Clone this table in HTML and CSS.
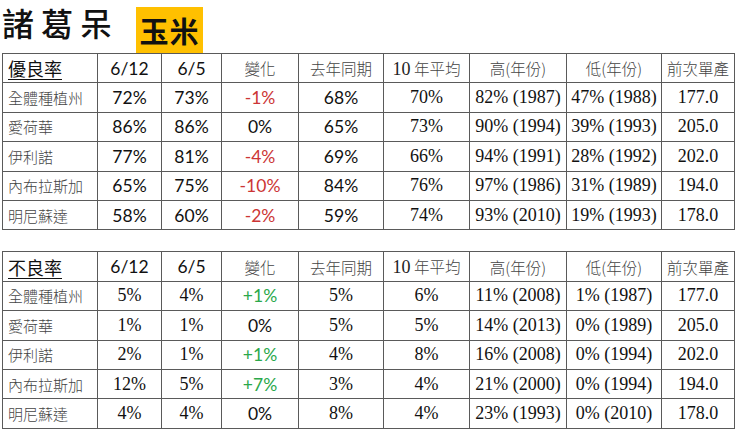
FILE: index.html
```html
<!DOCTYPE html>
<html lang="zh-Hant">
<head>
<meta charset="utf-8">
<link rel="stylesheet" href="styles.css">
</head>
<body>
<div class="page">
  <div class="head">
    <div class="title">諸葛呆</div>
    <div class="badge">玉米</div>
  </div>
  <table class="grid">
    <colgroup>
      <col class="c1"><col class="c2"><col class="c3"><col class="c4"><col class="c5"><col class="c6"><col class="c7"><col class="c8"><col class="c9">
    </colgroup>
    <tr>
      <th class="lead">優良率</th><th class="s">6/12</th><th class="s">6/5</th><th class="zh">變化</th><th class="zh">去年同期</th><th class="zh"><span class="r">10</span> 年平均</th><th class="zh">高(年份)</th><th class="zh">低(年份)</th><th class="zh">前次單產</th>
    </tr>
    <tr><td class="name">全體種植州</td><td class="s">72%</td><td class="s">73%</td><td class="s neg">-1%</td><td class="s">68%</td><td class="r">70%</td><td class="r">82% (1987)</td><td class="r">47% (1988)</td><td class="r">177.0</td></tr>
    <tr><td class="name">愛荷華</td><td class="s">86%</td><td class="s">86%</td><td class="s">0%</td><td class="s">65%</td><td class="r">73%</td><td class="r">90% (1994)</td><td class="r">39% (1993)</td><td class="r">205.0</td></tr>
    <tr><td class="name">伊利諾</td><td class="s">77%</td><td class="s">81%</td><td class="s neg">-4%</td><td class="s">69%</td><td class="r">66%</td><td class="r">94% (1991)</td><td class="r">28% (1992)</td><td class="r">202.0</td></tr>
    <tr><td class="name">內布拉斯加</td><td class="s">65%</td><td class="s">75%</td><td class="s neg">-10%</td><td class="s">84%</td><td class="r">76%</td><td class="r">97% (1986)</td><td class="r">31% (1989)</td><td class="r">194.0</td></tr>
    <tr><td class="name">明尼蘇達</td><td class="s">58%</td><td class="s">60%</td><td class="s neg">-2%</td><td class="s">59%</td><td class="r">74%</td><td class="r">93% (2010)</td><td class="r">19% (1993)</td><td class="r">178.0</td></tr>
  </table>
  <table class="grid second">
    <colgroup>
      <col class="c1"><col class="c2"><col class="c3"><col class="c4"><col class="c5"><col class="c6"><col class="c7"><col class="c8"><col class="c9">
    </colgroup>
    <tr>
      <th class="lead">不良率</th><th class="s">6/12</th><th class="s">6/5</th><th class="zh">變化</th><th class="zh">去年同期</th><th class="zh"><span class="r">10</span> 年平均</th><th class="zh">高(年份)</th><th class="zh">低(年份)</th><th class="zh">前次單產</th>
    </tr>
    <tr><td class="name">全體種植州</td><td class="r">5%</td><td class="r">4%</td><td class="s pos">+1%</td><td class="r">5%</td><td class="r">6%</td><td class="r">11% (2008)</td><td class="r">1% (1987)</td><td class="r">177.0</td></tr>
    <tr><td class="name">愛荷華</td><td class="r">1%</td><td class="r">1%</td><td class="s">0%</td><td class="r">5%</td><td class="r">5%</td><td class="r">14% (2013)</td><td class="r">0% (1989)</td><td class="r">205.0</td></tr>
    <tr><td class="name">伊利諾</td><td class="r">2%</td><td class="r">1%</td><td class="s pos">+1%</td><td class="r">4%</td><td class="r">8%</td><td class="r">16% (2008)</td><td class="r">0% (1994)</td><td class="r">202.0</td></tr>
    <tr><td class="name">內布拉斯加</td><td class="r">12%</td><td class="r">5%</td><td class="s pos">+7%</td><td class="r">3%</td><td class="r">4%</td><td class="r">21% (2000)</td><td class="r">0% (1994)</td><td class="r">194.0</td></tr>
    <tr><td class="name">明尼蘇達</td><td class="r">4%</td><td class="r">4%</td><td class="s">0%</td><td class="r">8%</td><td class="r">4%</td><td class="r">23% (1993)</td><td class="r">0% (2010)</td><td class="r">178.0</td></tr>
  </table>
</div>
</body>
</html>
```
FILE: styles.css
```css
html, body {
  margin: 0;
  padding: 0;
  background: #ffffff;
}
.page {
  padding: 0 0 0 2px;
  width: 740px;
  box-sizing: border-box;
}
.head {
  display: flex;
  align-items: flex-end;
  height: 53px;
}
.title {
  flex: 0 0 134px;
  font-family: "Noto Sans CJK TC", "Noto Sans CJK SC", sans-serif;
  font-weight: 500;
  font-size: 32px;
  letter-spacing: 7px;
  color: #111;
  line-height: 44px;
  align-self: flex-start;
  white-space: nowrap;
}
.badge {
  flex: 0 0 67px;
  height: 46px;
  background: #ffc000;
  font-family: "Noto Sans CJK TC", sans-serif;
  font-weight: 700;
  font-size: 29px;
  line-height: 46px;
  color: #111;
  text-align: center;
  letter-spacing: 1px;
}
.grid {
  border-collapse: collapse;
  table-layout: fixed;
  width: 732px;
}
.second {
  margin-top: 21px;
}
.c1 { width: 95px; }
.c2 { width: 64px; }
.c3 { width: 60px; }
.c4 { width: 77px; }
.c5 { width: 85px; }
.c6 { width: 86px; }
.c7 { width: 97px; }
.c8 { width: 95px; }
.c9 { width: 73px; }
.grid tr {
  height: 29.4px;
}
.grid th, .grid td {
  border: 1px solid #5a5a5a;
  padding: 0;
  text-align: center;
  vertical-align: middle;
  font-weight: 400;
  white-space: nowrap;
  overflow: hidden;
  color: #111;
}
.grid .lead {
  text-align: left;
  padding-left: 5px;
  font-family: "Noto Sans CJK TC", sans-serif;
  font-size: 18px;
  text-decoration: underline;
  text-underline-offset: 3px;
  text-decoration-thickness: 1px;
  color: #111;
}
.grid .zh {
  font-family: "Noto Sans CJK TC", sans-serif;
  font-weight: 300;
  font-size: 15.5px;
  color: #444;
}
.grid .zh .r {
  font-family: "Liberation Serif", serif;
  font-weight: 400;
  font-size: 18px;
  color: #222;
}
.grid .name {
  text-align: left;
  padding-left: 5px;
  font-family: "Noto Sans CJK TC", sans-serif;
  font-weight: 300;
  font-size: 15px;
  color: #444;
}
.grid .s {
  font-family: Lato, "Liberation Sans", sans-serif;
  font-size: 17.5px;
}
.grid .r {
  font-family: "Liberation Serif", serif;
  font-size: 18px;
}
.grid .neg {
  color: #cc3535;
}
.grid .pos {
  color: #2aa84a;
}
```
